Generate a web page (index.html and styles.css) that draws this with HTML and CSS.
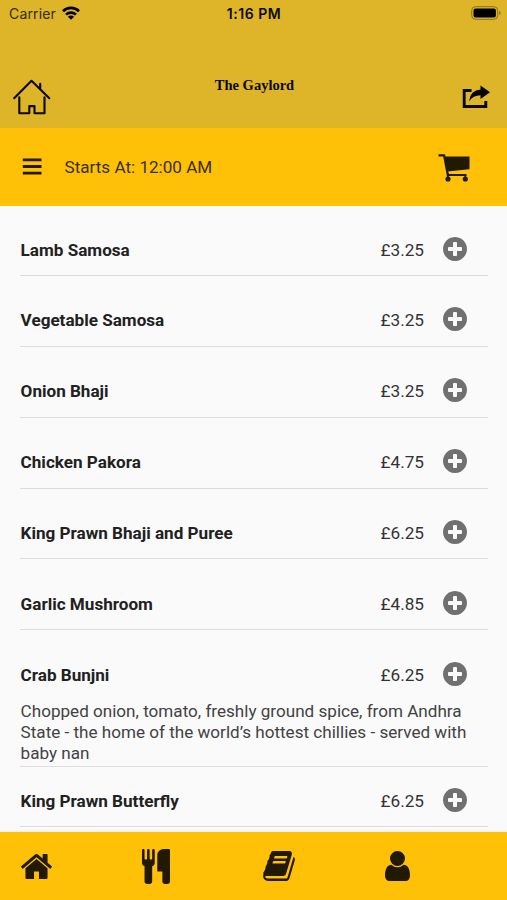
FILE: index.html
```html
<!DOCTYPE html>
<html lang="en">
<head>
<meta charset="utf-8">
<title>The Gaylord</title>
<link rel="stylesheet" href="styles.css">
</head>
<body>
<svg class="defs" aria-hidden="true">
  <symbol id="plus" viewBox="128 128 1536 1536"><path d="M1344 960v-128q0-26-19-45t-45-19h-256v-256q0-26-19-45t-45-19h-128q-26 0-45 19t-19 45v256h-256q-26 0-45 19t-19 45v128q0 26 19 45t45 19h256v256q0 26 19 45t45 19h128q26 0 45-19t19-45v-256h256q26 0 45-19t19-45zm320-64q0 209-103 385.5t-279.5 279.5-385.5 103-385.5-103-279.5-279.5-103-385.5 103-385.5 279.5-279.5 385.5-103 385.5 103 279.5 279.5 103 385.5z"/></symbol>
</svg>
<div class="app">
  <header class="top">
    <div class="status">
      <div class="carrier"><span class="carrier-name">Carrier</span>
        <svg class="wifi" viewBox="0 0 18 14"><g fill="none" stroke="#000" stroke-width="2.6"><path d="M1 5.2a11.4 11.4 0 0 1 16 0"/><path d="M4 8.6a7.2 7.2 0 0 1 10 0"/></g><path d="M9 13.8L5.9 10.7a4.4 4.4 0 0 1 6.2 0z"/></svg>
      </div>
      <span class="time">1:16 PM</span>
      <svg class="battery" viewBox="0 0 30 14"><rect x=".7" y=".7" width="26" height="12.6" rx="3.8" fill="none" stroke="#8b721b" stroke-width="1"/><rect x="2.5" y="2.5" width="22.4" height="9" rx="2" /><path d="M28.2 5q1.5.6 1.5 2t-1.5 2z" fill="#8b721b"/></svg>
    </div>
    <div class="titlebar">
      <svg class="house" viewBox="0 0 38 37"><g fill="none" stroke="#0a0800" stroke-width="2.1" stroke-linecap="round" stroke-linejoin="round"><path d="M1.2 19.2L18.5 1.8l17.8 17.4M27.2 10V4.8"/><path d="M6.300 18.300v16h10v-7.200h5.200v7.200h10v-16"/></g></svg>
      <h1 class="title">The Gaylord</h1>
      <svg class="share" viewBox="0 0 29 24"><path d="M10.500 5.500H3.200v16h21.600V16" fill="none" stroke="#0a0800" stroke-width="2.900"/><path d="M19.500 .5L29 7.200 19.500 14V10.200Q12 10.200 8 16.200Q9.500 5.200 19.500 4.500z"/></svg>
    </div>
  </header>
  <div class="toolbar">
    <svg class="menu" viewBox="0 0 20 17"><path d="M.8 1.900h18.700M.8 8.500h18.700M.8 15.100h18.700" stroke="#211a00" stroke-width="2.900"/></svg>
    <span class="starts">Starts At: 12:00 AM</span>
    <svg class="cart" viewBox="0 0 34 30"><path d="M1.500 2.300h5.600l4 21.200M10 22h19.500" fill="none" stroke="#211a00" stroke-width="2.200"/><path d="M7.500 3.500H32.500V16.300L10.500 18.600z"/><circle cx="11" cy="26" r="2.600"/><circle cx="28.300" cy="26" r="2.600"/><path d="M11 20v6M28.300 21v5" stroke="#211a00" stroke-width="1.600"/></svg>
  </div>
  <main class="list">
    <div class="item"><div class="line"><span class="name">Lamb Samosa</span><span class="price">£3.25</span><svg class="add"><use href="#plus"/></svg></div></div>
    <div class="item"><div class="line"><span class="name">Vegetable Samosa</span><span class="price">£3.25</span><svg class="add"><use href="#plus"/></svg></div></div>
    <div class="item"><div class="line"><span class="name">Onion Bhaji</span><span class="price">£3.25</span><svg class="add"><use href="#plus"/></svg></div></div>
    <div class="item"><div class="line"><span class="name">Chicken Pakora</span><span class="price">£4.75</span><svg class="add"><use href="#plus"/></svg></div></div>
    <div class="item"><div class="line"><span class="name">King Prawn Bhaji and Puree</span><span class="price">£6.25</span><svg class="add"><use href="#plus"/></svg></div></div>
    <div class="item"><div class="line"><span class="name">Garlic Mushroom</span><span class="price">£4.85</span><svg class="add"><use href="#plus"/></svg></div></div>
    <div class="item described"><div class="line"><span class="name">Crab Bunjni</span><span class="price">£6.25</span><svg class="add"><use href="#plus"/></svg></div>
      <p class="desc">Chopped onion, tomato, freshly ground spice, from Andhra<br>State - the home of the world’s hottest chillies - served with<br>baby nan</p></div>
    <div class="item last"><div class="line"><span class="name">King Prawn Butterfly</span><span class="price">£6.25</span><svg class="add"><use href="#plus"/></svg></div></div>
  </main>
  <nav class="tabs">
    <svg class="tab-home" viewBox="24 253 1616 1283" preserveAspectRatio="none"><path d="M1408 992v480q0 26-19 45t-45 19h-384v-384h-256v384h-384q-26 0-45-19t-19-45v-480q0-1 .5-3t.5-3l575-474 575 474q1 2 1 6zm223-69l-62 74q-8 9-21 11h-3q-13 0-21-7l-692-577-692 577q-12 8-24 7-13-2-21-11l-62-74q-8-10-7-23.5t11-21.5l719-599q32-26 76-26t76 26l244 204v-195q0-14 9-23t23-9h192q14 0 23 9t9 23v408l219 182q10 8 11 21.5t-7 23.5z"/></svg>
    <svg class="tab-menu" viewBox="192 64 1408 1792" preserveAspectRatio="none"><path d="M832 128v640q0 61-35.5 111t-92.5 70v779q0 52-38 90t-90 38h-128q-52 0-90-38t-38-90v-779q-57-20-92.5-70t-35.5-111v-640q0-26 19-45t45-19 45 19 19 45v416q0 26 19 45t45 19 45-19 19-45v-416q0-26 19-45t45-19 45 19 19 45v416q0 26 19 45t45 19 45-19 19-45v-416q0-26 19-45t45-19 45 19 19 45zm768 0v1600q0 52-38 90t-90 38h-128q-52 0-90-38t-38-90v-512h-224q-13 0-22.5-9.5t-9.5-22.5v-800q0-132 94-226t226-94h256q26 0 45 19t19 45z"/></svg>
    <svg class="tab-book" viewBox="60 128 1672 1536" preserveAspectRatio="none"><path d="M1703 478q40 57 18 129l-275 906q-19 64-76.5 107.5t-122.5 43.5h-923q-77 0-148.5-53.5t-99.5-131.5q-24-67-2-127 0-4 3-27t4-37q1-8-3-21.5t-3-19.5q2-11 8-21t16.5-23.5 16.5-23.5q23-38 45-91.500t30-91.500q3-10 .5-30t-.5-28q3-11 17-28t17-23q21-36 42-92t25-90q1-9-2.500-32t.5-28q4-13 22-30.500t22-22.500q19-26 42.500-84.500t27.500-96.500q1-8-3-25.500t-2-26.500q2-8 9-18t18-23 17-21q8-12 16.500-30.500t15-35 16-36 19.500-32 26.500-23.500 36-11.500 47.500 5.500l-1 3q38-9 51-9h761q74 0 114 56t18 130l-274 906q-36 119-71.500 153.500t-128.500 34.500h-869q-27 0-38 15-11 16-1 43 24 70 144 70h923q29 0 56-15.500t35-41.500l300-987q7-22 5-57 38 15 59 43zm-1064 2q-4 13 2 22.500t20 9.500h608q13 0 25.500-9.500t16.500-22.500l21-64q4-13-2-22.500t-20-9.500h-608q-13 0-25.500 9.500t-16.500 22.500zm-83 256q-4 13 2 22.500t20 9.500h608q13 0 25.500-9.500t16.500-22.500l21-64q4-13-2-22.500t-20-9.500h-608q-13 0-25.500 9.500t-16.500 22.500z"/></svg>
    <svg class="tab-user" viewBox="256 128 1280 1536" preserveAspectRatio="none"><path d="M1536 1399q0 109-62.500 187t-150.500 78h-854q-88 0-150.500-78t-62.500-187q0-85 8.500-160.500t31.500-152 58.500-131 94-89 134.500-34.500q131 128 313 128t313-128q76 0 134.500 34.500t94 89 58.500 131 31.500 152 8.500 160.500zm-256-887q0 159-112.500 271.500t-271.500 112.500-271.500-112.500-112.500-271.500 112.500-271.500 271.500-112.500 271.500 112.500 112.500 271.500z"/></svg>
  </nav>
</div>
</body>
</html>
```
FILE: styles.css
```css
* { box-sizing: border-box; }
body { margin: 0; font-family: Roboto, "Liberation Sans", sans-serif; color: #212121; }
svg { display: block; flex: none; }
.defs { display: none; }
.app { width: 507px; height: 900px; display: flex; flex-direction: column; overflow: hidden; background: #fafafa; }

.top { flex: none; height: 128px; background: #deb528; display: flex; flex-direction: column; }
.status { height: 27px; display: grid; grid-template-columns: 1fr auto 1fr; align-items: center; padding: 0 6px 0 9px; font-family: Inter, sans-serif; font-size: 14px; color: #0c0900; }
.carrier { display: flex; align-items: center; gap: 6px; }
.carrier-name { color: #332a08; letter-spacing: 0.15px; }
.wifi { width: 18px; height: 14px; margin-top: -1px; }
.time { font-weight: 600; letter-spacing: 0.55px; margin-right: 2px; }
.battery { width: 30px; height: 14px; justify-self: end; margin-top: -1px; }
.titlebar { flex: 1; display: grid; grid-template-columns: 38px 1fr 29px; align-items: start; padding: 52px 17px 0 13px; }
.house { width: 38px; height: 37px; }
.title { margin: -3px 3px 0 0; text-align: center; font: bold 14.500px/18px "Liberation Serif", serif; color: #0a0800; }
.share { width: 29px; height: 24px; margin-top: 6px; }

.toolbar { flex: none; height: 78px; background: #ffc107; display: flex; align-items: center; padding: 0 36px 0 22px; fill: #211a00; }
.menu { width: 20px; height: 17px; margin-top: -1px; }
.starts { flex: 1; margin-left: 22.500px; font-size: 17.100px; color: #3a2e08; }
.cart { width: 34px; height: 30px; margin-top: 2px; }

.list { flex: 1; min-height: 0; padding: 0 19px 0 20px; }
.item { height: 70.850px; padding-top: 31.400px; border-bottom: 1px solid #dcdcdc; }
.item:first-child { height: 70px; padding-top: 31px; }
.line { display: flex; align-items: center; height: 24px; }
.name { flex: 1; font-size: 17.100px; font-weight: 700; padding: 2px 0 0 0.600px; }
.price { font-size: 17.200px; margin-right: 19.300px; color: #333; padding-top: 2px; }
.add { width: 24px; height: 24px; margin-right: 20.700px; fill: #707070; }
.described { height: 136.700px; }
.desc { margin: 15.600px 0 0 0.600px; font-size: 17.100px; line-height: 21px; color: #424242; white-space: nowrap; }
.last { height: 60px; padding-top: 21px; }

.tabs { flex: none; height: 68px; background: #ffc107; display: flex; align-items: center; padding-left: 21px; fill: #211a00; box-shadow: 0 0 3px rgba(0, 0, 0, 0.12); }
.tab-home { width: 31px; height: 25px; margin-right: 90px; }
.tab-menu { width: 28px; height: 35px; margin-right: 92.500px; }
.tab-book { width: 32px; height: 30px; margin-right: 90px; }
.tab-user { width: 25px; height: 30px; }
```
